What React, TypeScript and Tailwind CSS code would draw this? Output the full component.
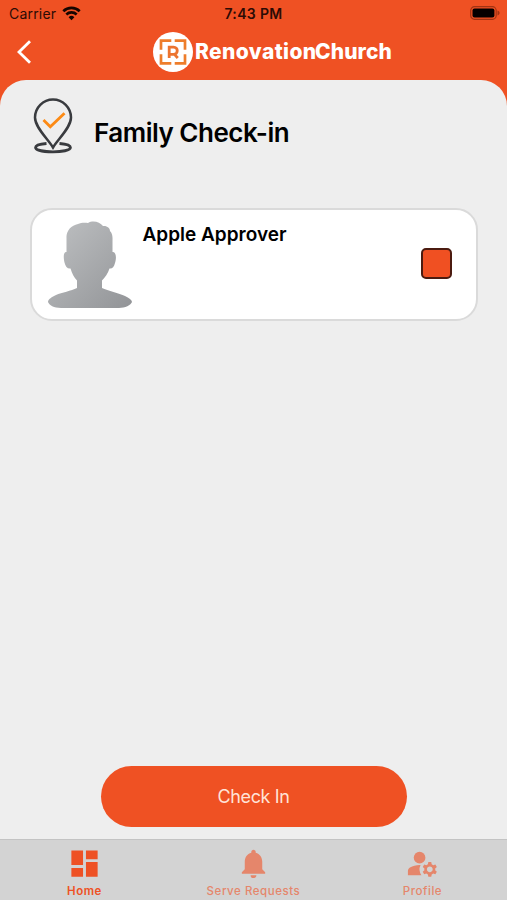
import React from "react";
import { MdDashboard, MdNotifications, MdManageAccounts } from "react-icons/md";

function StatusBar() {
  return (
    <div className="grid h-[26px] grid-cols-3 items-center pl-[9px] pr-[7px] text-[14px] text-[#2c0b05]">
      <div className="flex items-center gap-[6px]">
        <span className="tracking-[0.2px]">Carrier</span>
        <svg width="19" height="15" viewBox="0 0 19 15" fill="none" stroke="#160500">
          <path d="M1.3 5.2a11.8 11.8 0 0 1 16.4 0" strokeWidth="2.7" />
          <path d="M4.3 8.5a7.5 7.5 0 0 1 10.4 0" strokeWidth="2.6" />
          <path d="M9.5 14.2 6.6 11.2a4.2 4.2 0 0 1 5.8 0Z" fill="#160500" stroke="none" />
        </svg>
      </div>
      <div className="-ml-[2px] pt-px text-center font-semibold tracking-[0.35px] whitespace-nowrap">7:43 PM</div>
      <div className="flex justify-end">
        <svg width="31" height="14" viewBox="0 0 31 14">
          <rect x="1.7" y="0.7" width="25.5" height="12.6" rx="3.8" fill="none" stroke="#a13313" strokeWidth="1.2" />
          <rect x="3.5" y="2.5" width="21.9" height="9" rx="2" fill="#050000" />
          <path d="M28.5 4.6c2.8 1.2 2.8 3.6 0 4.8Z" fill="#a13313" />
        </svg>
      </div>
    </div>
  );
}

function Logo() {
  return (
    <div className="flex items-center">
      <svg width="40" height="40" viewBox="0 0 40 40">
        <circle cx="20" cy="20" r="20" fill="#fff" />
        <g fill="none" stroke="#ee7d2b" strokeWidth="2.7">
          <path d="M8 17.8V8.6H18.3M21.700 8.6H32V17.8M32 22.2V31.4H21.700M18.3 31.4H8V22.2" />
        </g>
        <path
          d="M16.2 26V15.2h4.3c5 0 5 7.2 0 7.2h-4.3M21.2 22.1l3.6 3.9"
          fill="none"
          stroke="#ec7430"
          strokeWidth="2.8"
        />
      </svg>
      <div className="ml-[2px] flex text-[21px] leading-[26px] font-extrabold text-white">
        <span className="w-[120px] tracking-[0.4px]">Renovation</span>
        <span className="tracking-[0.1px]">Church</span>
      </div>
    </div>
  );
}

function Header() {
  return (
    <div className="flex h-[54px] items-center pb-[3px]">
      <div className="flex w-[153px] pl-4">
        <svg width="16" height="24" viewBox="0 0 16 24" fill="none" stroke="#fff" strokeWidth="2.8">
          <path d="M14 1.2 3 12l11 10.8" />
        </svg>
      </div>
      <Logo />
    </div>
  );
}

function PinIcon() {
  return (
    <svg width="40" height="56" viewBox="0 0 40 56" fill="none" stroke="#393b3f" strokeWidth="2.5">
      <path d="M20 49.5C15 41 2 29.5 2 19.5a18 18 0 0 1 36 0C38 29.5 25 41 20 49.5Z" />
      <path d="M13.5 45.5C7 46 2.6 47.2 2.6 49.5c0 5.8 34.8 5.8 34.8 0 0-2.3-4.4-3.5-10.9-4" strokeWidth="2.9" />
      <path d="m10.5 22 6.8 6.7L31.5 15.2" stroke="#fc8a15" strokeWidth="2.8" />
    </svg>
  );
}

function Avatar() {
  return (
    <svg width="86" height="88" viewBox="0 0 86 88">
      <defs>
        <linearGradient id="shade" x1="0" y1="0" x2="1" y2="1">
          <stop offset="0" stopColor="#bfc1c3" />
          <stop offset="1" stopColor="#929497" />
        </linearGradient>
      </defs>
      <path
        fill="url(#shade)"
        d="M19.5 31V17C19 10 24 4.500 31 3c3-1.500 7-1.500 10-1 5-3 12-1 15 3 4-.5 7 2 7 5 3 3 2.500 7 2.500 10v11c4-.5 4 7 2.500 11-1 4-3 6-5.500 5.500-1.500 5-4.500 9-7.500 12V67c6 3 17 5 23 8 4 2 7 4 7 6-1 3-7 6-13 6H14C7 87 2 84 1 81c0-3 4-5 8-7 6-2.500 15-4 21-7v-7.500c-3-3-5-7-6.500-12-3 .5-5-2-6-6-1-4-1.500-11 2-10.500Z"
      />
    </svg>
  );
}

function FamilyCard() {
  return (
    <div className="mx-[29.5px] flex h-[113px] rounded-[22px] border-2 border-[#dadada] bg-white">
      <div className="w-[111px] pt-[11px] pl-[15px]">
        <Avatar />
      </div>
      <div className="flex-1 pt-[13px] text-[19px] leading-[24px] font-semibold text-black">
        Apple Approver
      </div>
      <div className="mt-[38px] mr-6 size-[31px] rounded-[5px] border-2 border-[#4b1b10] bg-[#f05022]" />
    </div>
  );
}

function TabBar() {
  const item = "flex w-1/3 flex-col items-center pt-[6px] text-[11.5px] leading-[16px] tracking-[0.55px]";
  return (
    <nav className="flex h-[61px] border-t border-[#c3c3c3] bg-[#d3d3d3] font-medium">
      <div className={`${item} text-[#ee5124]`}>
        <MdDashboard size={35} />
        <span className="mt-[2px] font-semibold">Home</span>
      </div>
      <div className={`${item} text-[#e5866b]`}>
        <MdNotifications size={35} />
        <span className="mt-[2px]">Serve Requests</span>
      </div>
      <div className={`${item} text-[#e5866b]`}>
        <MdManageAccounts size={35} />
        <span className="mt-[2px]">Profile</span>
      </div>
    </nav>
  );
}

export default function App() {
  return (
    <div className="flex h-[900px] w-[507px] flex-col overflow-hidden bg-[#ef5123] font-['Inter',sans-serif]">
      <StatusBar />
      <Header />
      <main className="flex flex-1 flex-col rounded-t-[26px] bg-[#eeeeee]">
        <div className="flex h-[128px] items-start pt-[18px] pl-[33px]">
          <PinIcon />
          <h1 className="mt-[19px] ml-[21px] text-[26px] leading-[32px] font-semibold tracking-[-0.5px] text-black">
            Family Check-in
          </h1>
        </div>
        <FamilyCard />
        <button className="mx-auto mt-auto mb-3 h-[61px] w-[306px] rounded-full bg-[#ef5123] text-[18px] tracking-[-0.35px] text-[#ffe3d8]">
          Check In
        </button>
      </main>
      <TabBar />
    </div>
  );
}
